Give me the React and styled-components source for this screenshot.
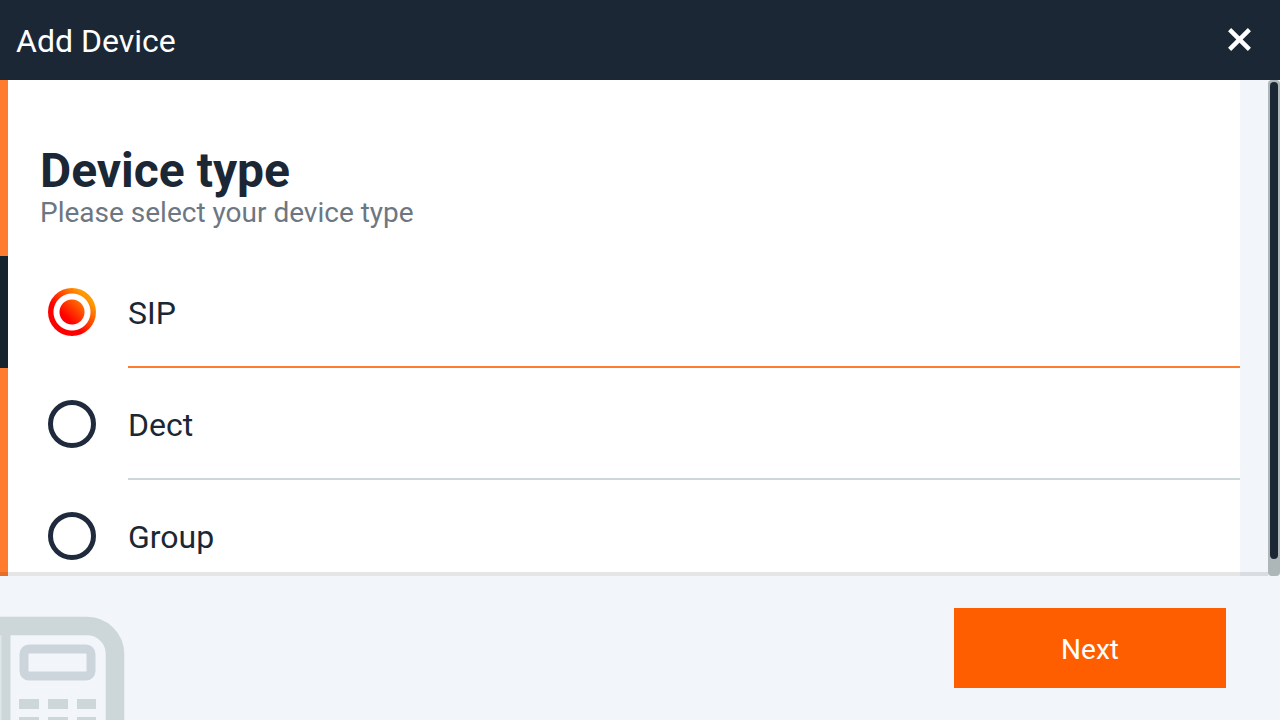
import React, { useState } from "react";
import styled, { createGlobalStyle } from "styled-components";

const deviceTypes = ["SIP", "Dect", "Group"];

const App = () => {
  const [selected, setSelected] = useState("SIP");

  return (
    <Wrapper>
      <GlobalStyle />
      <Header>
        <Title>Add Device</Title>
        <CloseButton type="button" aria-label="Close">
          <CloseIcon />
        </CloseButton>
      </Header>
      <Body>
        <Content>
          <Intro>
            <Heading id="device-type">Device type</Heading>
            <Description>Please select your device type</Description>
          </Intro>
          <Options role="radiogroup" aria-labelledby="device-type">
            {deviceTypes.map((type) => (
              <Option key={type} $active={type === selected}>
                <Radio
                  type="radio"
                  name="deviceType"
                  value={type}
                  checked={type === selected}
                  onChange={() => setSelected(type)}
                />
                <OptionName $active={type === selected}>{type}</OptionName>
              </Option>
            ))}
          </Options>
        </Content>
        <Track>
          <Thumb />
        </Track>
        <Shade />
      </Body>
      <Footer>
        <PhoneIcon />
        <NextButton type="button">Next</NextButton>
      </Footer>
    </Wrapper>
  );
};

const CloseIcon = () => (
  <svg width="24" height="24" viewBox="0 0 24 24" aria-hidden="true">
    <path
      d="M1.6 1.6L21.4 21.4M21.4 1.6L1.6 21.4"
      stroke="#fff"
      strokeWidth="4.4"
    />
  </svg>
);

const PhoneIcon = () => (
  <svg width="126" height="104" viewBox="0 0 126 104" aria-hidden="true">
    <g fill="none" stroke="#cdd6d9">
      <path d="M-10 10H87A28 28 0 0 1 115 38V120" strokeWidth="18.5" />
      <path d="M6 18V110" strokeWidth="9" />
      <rect
        x="24"
        y="33"
        width="67"
        height="27"
        rx="5"
        stroke="#ccd5dc"
        strokeWidth="9"
      />
    </g>
    <g fill="#cdd6d9">
      <rect x="0" y="18" width="2" height="90" opacity="0.5" />
      <rect x="19" y="83" width="20" height="10" />
      <rect x="48" y="83" width="20" height="10" />
      <rect x="77" y="83" width="19" height="10" />
      <rect x="19" y="101" width="20" height="10" />
      <rect x="48" y="101" width="20" height="10" />
      <rect x="77" y="101" width="19" height="10" />
    </g>
  </svg>
);

const GlobalStyle = createGlobalStyle`
  * {
    box-sizing: border-box;
  }
  body {
    margin: 0;
    font-family: Roboto, sans-serif;
    color: #1b2735;
    background-color: #f2f5fa;
  }
`;

const Wrapper = styled.div`
  height: 100vh;
  display: flex;
  flex-direction: column;
`;

const Header = styled.header`
  display: flex;
  align-items: center;
  justify-content: space-between;
  height: 80px;
  padding: 0 24px 0 16px;
  background-color: #1b2735;
  color: #fff;
  flex-shrink: 0;
`;

const Title = styled.h1`
  margin: 0;
  padding-top: 2px;
  font-size: 32px;
  line-height: 40px;
  font-weight: 400;
`;

const CloseButton = styled.button`
  display: flex;
  padding: 4px;
  border: none;
  background: none;
  cursor: pointer;
`;

const Body = styled.main`
  position: relative;
  display: flex;
  flex: 1;
  min-height: 0;
`;

const Content = styled.div`
  flex: 1;
  margin-right: 28px;
  overflow-y: auto;
  scrollbar-width: none;
  background-color: #fff;
`;

const Intro = styled.div`
  padding: 64px 32px 28px;
  border-left: 8px solid #ff7b2e;
`;

const Heading = styled.h2`
  margin: 0;
  font-size: 48px;
  line-height: 54px;
  font-weight: 700;
`;

const Description = styled.p`
  margin: 0;
  font-size: 28px;
  line-height: 30px;
  color: #6d7782;
`;

const Options = styled.div`
  display: flex;
  flex-direction: column;
`;

const Option = styled.label`
  display: flex;
  align-items: center;
  gap: 32px;
  height: 112px;
  padding-left: 40px;
  border-left: 8px solid ${({ $active }) => ($active ? "#14232e" : "#ff7b2e")};
  cursor: pointer;
`;

const Radio = styled.input`
  appearance: none;
  flex-shrink: 0;
  width: 48px;
  height: 48px;
  margin: 0;
  border: 5px solid #1f2a3d;
  border-radius: 50%;
  &:checked {
    border: none;
    background: radial-gradient(
        circle,
        transparent 12px,
        #fff 13px,
        #fff 18px,
        transparent 19px
      ),
      linear-gradient(45deg, #ff0000 38%, #ff9900 80%);
  }
`;

const OptionName = styled.span`
  flex: 1;
  height: 100%;
  padding-top: 2px;
  border-bottom: 2px solid ${({ $active }) => ($active ? "#ff7b2e" : "#cdd6d9")};
  font-size: 32px;
  line-height: 110px;
`;

const Track = styled.div`
  width: 12px;
  padding: 2px;
  border-radius: 4px;
  background-color: #adb7b8;
`;

const Thumb = styled.div`
  height: 97%;
  border-radius: 4px;
  background-color: #1b2735;
`;

const Shade = styled.div`
  position: absolute;
  left: 0;
  right: 12px;
  bottom: 0;
  height: 4px;
  background-color: rgba(0, 0, 0, 0.1);
  pointer-events: none;
`;

const Footer = styled.footer`
  display: flex;
  align-items: flex-end;
  justify-content: space-between;
  height: 144px;
  padding-right: 54px;
  background-color: #f2f5fa;
  flex-shrink: 0;
`;

const NextButton = styled.button`
  width: 272px;
  height: 80px;
  margin-bottom: 32px;
  padding: 2px 0 0;
  border: none;
  background-color: #ff5e00;
  color: #fff;
  font-family: inherit;
  font-size: 28px;
  cursor: pointer;
`;

export default App;
